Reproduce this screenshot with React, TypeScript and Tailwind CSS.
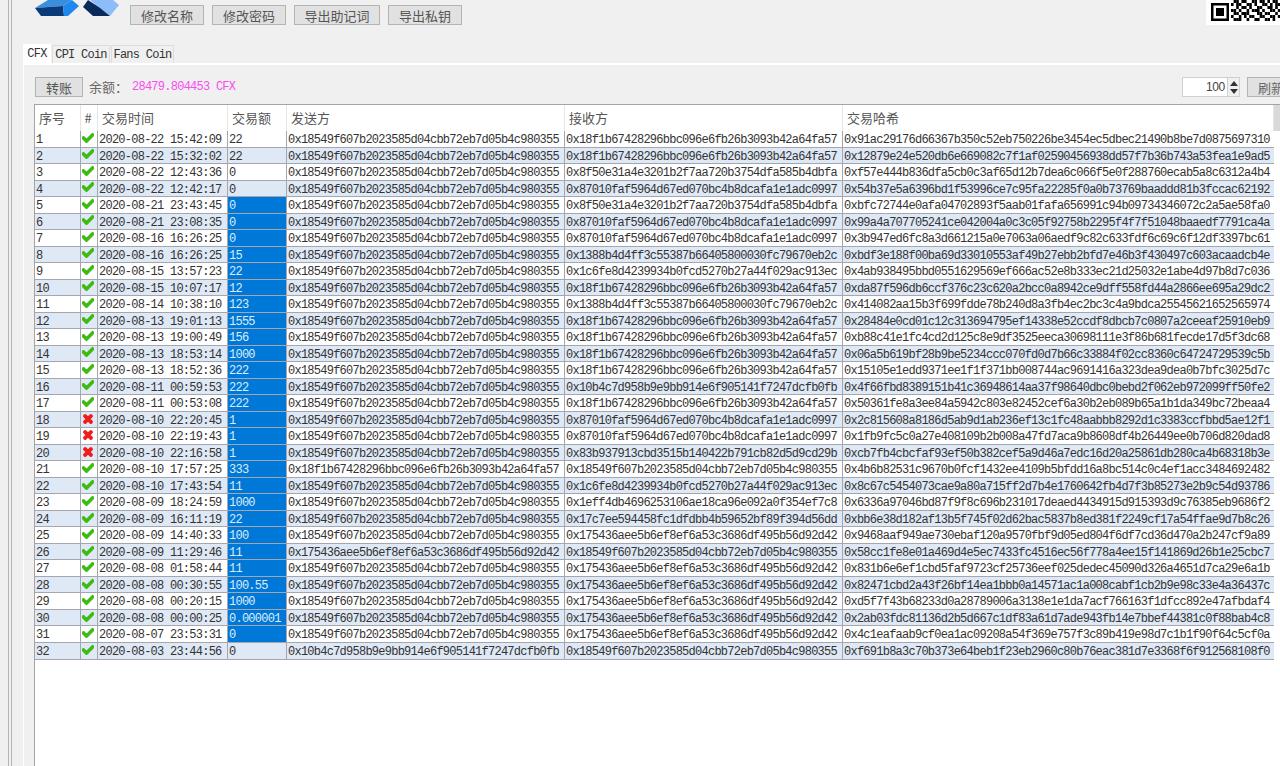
import { FaCheck, FaTimes } from 'react-icons/fa';

const S = '0x18549f607b2023585d04cbb72eb7d05b4c980355';
const A = '0x18f1b67428296bbc096e6fb26b3093b42a64fa57';
const B = '0x8f50e31a4e3201b2f7aa720b3754dfa585b4dbfa';
const C = '0x87010faf5964d67ed070bc4b8dcafa1e1adc0997';
const D = '0x1388b4d4ff3c55387b66405800030fc79670eb2c';
const E = '0x1c6fe8d4239934b0fcd5270b27a44f029ac913ec';
const F = '0x10b4c7d958b9e9bb914e6f905141f7247dcfb0fb';
const G = '0x175436aee5b6ef8ef6a53c3686df495b56d92d42';

type Row = [string, string, string, string, string];

const rows: Row[] = [
  ['2020-08-22 15:42:09', '22', S, A, '0x91ac29176d66367b350c52eb750226be3454ec5dbec21490b8be7d0875697310'],
  ['2020-08-22 15:32:02', '22', S, A, '0x12879e24e520db6e669082c7f1af02590456938dd57f7b36b743a53fea1e9ad5'],
  ['2020-08-22 12:43:36', '0', S, B, '0xf57e444b836dfa5cb0c3af65d12b7dea6c066f5e0f288760ecab5a8c6312a4b4'],
  ['2020-08-22 12:42:17', '0', S, C, '0x54b37e5a6396bd1f53996ce7c95fa22285f0a0b73769baaddd81b3fccac62192'],
  ['2020-08-21 23:43:45', '0', S, B, '0xbfc72744e0afa04702893f5aab01fafa656991c94b09734346072c2a5ae58fa0'],
  ['2020-08-21 23:08:35', '0', S, C, '0x99a4a707705241ce042004a0c3c05f92758b2295f4f7f51048baaedf7791ca4a'],
  ['2020-08-16 16:26:25', '0', S, C, '0x3b947ed6fc8a3d661215a0e7063a06aedf9c82c633fdf6c69c6f12df3397bc61'],
  ['2020-08-16 16:26:25', '15', S, D, '0xbdf3e188f00ba69d33010553af49b27ebb2bfd7e46b3f430497c603acaadcb4e'],
  ['2020-08-15 13:57:23', '22', S, E, '0x4ab938495bbd0551629569ef666ac52e8b333ec21d25032e1abe4d97b8d7c036'],
  ['2020-08-15 10:07:17', '12', S, A, '0xda87f596db6ccf376c23c620a2bcc0a8942ce9dff558fd44a2866ee695a29dc2'],
  ['2020-08-14 10:38:10', '123', S, D, '0x414082aa15b3f699fdde78b240d8a3fb4ec2bc3c4a9bdca25545621652565974'],
  ['2020-08-13 19:01:13', '1555', S, A, '0x28484e0cd01c12c313694795ef14338e52ccdf8dbcb7c0807a2ceeaf25910eb9'],
  ['2020-08-13 19:00:49', '156', S, A, '0xb88c41e1fc4cd2d125c8e9df3525eeca30698111e3f86b681fecde17d5f3dc68'],
  ['2020-08-13 18:53:14', '1000', S, A, '0x06a5b619bf28b9be5234ccc070fd0d7b66c33884f02cc8360c64724729539c5b'],
  ['2020-08-13 18:52:36', '222', S, A, '0x15105e1edd9371ee1f1f371bb008744ac9691416a323dea9dea0b7bfc3025d7c'],
  ['2020-08-11 00:59:53', '222', S, F, '0x4f66fbd8389151b41c36948614aa37f98640dbc0bebd2f062eb972099ff50fe2'],
  ['2020-08-11 00:53:08', '222', S, A, '0x50361fe8a3ee84a5942c803e82452cef6a30b2eb089b65a1b1da349bc72beaa4'],
  ['2020-08-10 22:20:45', '1', S, C, '0x2c815608a8186d5ab9d1ab236ef13c1fc48aabbb8292d1c3383ccfbbd5ae12f1'],
  ['2020-08-10 22:19:43', '1', S, C, '0x1fb9fc5c0a27e408109b2b008a47fd7aca9b8608df4b26449ee0b706d820dad8'],
  ['2020-08-10 22:16:58', '1', S, '0x83b937913cbd3515b140422b791cb82d5d9cd29b', '0xcb7fb4cbcfaf93ef50b382cef5a9d46a7edc16d20a25861db280ca4b68318b3e'],
  ['2020-08-10 17:57:25', '333', A, S, '0x4b6b82531c9670b0fcf1432ee4109b5bfdd16a8bc514c0c4ef1acc3484692482'],
  ['2020-08-10 17:43:54', '11', S, E, '0x8c67c5454073cae9a80a715ff2d7b4e1760642fb4d7f3b85273e2b9c54d93786'],
  ['2020-08-09 18:24:59', '1000', S, '0x1eff4db4696253106ae18ca96e092a0f354ef7c8', '0x6336a97046bd87f9f8c696b231017deaed4434915d915393d9c76385eb9686f2'],
  ['2020-08-09 16:11:19', '22', S, '0x17c7ee594458fc1dfdbb4b59652bf89f394d56dd', '0xbb6e38d182af13b5f745f02d62bac5837b8ed381f2249cf17a54ffae9d7b8c26'],
  ['2020-08-09 14:40:33', '100', S, G, '0x9468aaf949ae730ebaf120a9570fbf9d05ed804f6df7cd36d470a2b247cf9a89'],
  ['2020-08-09 11:29:46', '11', G, S, '0x58cc1fe8e01a469d4e5ec7433fc4516ec56f778a4ee15f141869d26b1e25cbc7'],
  ['2020-08-08 01:58:44', '11', S, G, '0x831b6e6ef1cbd5faf9723cf25736eef025dedec45090d326a4651d7ca29e6a1b'],
  ['2020-08-08 00:30:55', '100.55', S, G, '0x82471cbd2a43f26bf14ea1bbb0a14571ac1a008cabf1cb2b9e98c33e4a36437c'],
  ['2020-08-08 00:20:15', '1000', S, G, '0xd5f7f43b68233d0a28789006a3138e1e1da7acf766163f1dfcc892e47afbdaf4'],
  ['2020-08-08 00:00:25', '0.000001', S, G, '0x2ab03fdc81136d2b5d667c1df83a61d7ade943fb14e7bbef44381c0f88bab4c8'],
  ['2020-08-07 23:53:31', '0', S, G, '0x4c1eafaab9cf0ea1ac09208a54f369e757f3c89b419e98d7c1b1f90f64c5cf0a'],
  ['2020-08-03 23:44:56', '0', F, S, '0xf691b8a3c70b373e64beb1f23eb2960c80b76eac381d7e3368f6f912568108f0'],
];

const qr = [
  '0110110011011010110100',
  '1011001101001101011011',
  '0010110100110011010110',
  '1101001011101001101001',
  '0110111000110110010110',
  '1001010110011001101101',
  '0111001001100110100010',
];

function Btn({ label, w }: { label: string; w: string }) {
  return (
    <button className={`${w} h-[20px] bg-[#e1e1e1] border border-[#b4b4b4] text-[13px] leading-none text-[#555] font-['Noto_Sans_CJK_SC',sans-serif]`}>
      {label}
    </button>
  );
}

function Logo() {
  return (
    <svg width="84" height="16" viewBox="0 0 84 16" className="shrink-0">
      <polygon points="0,8 13,0 37,0 28,6" fill="#3a8fdc" />
      <polygon points="0,8 6,16 29,16 28,6" fill="#0b3a7a" />
      <polygon points="28,6 37,0 44,6 33,16 29,16" fill="#1e88f0" />
      <polygon points="55,0 78,0 84,5 75,16 65,9" fill="#8dbdf9" />
      <polygon points="48,7 53,0 65,8 75,16 58,16" fill="#0a2a5a" />
    </svg>
  );
}

function QrCode() {
  return (
    <div className="w-[74px] h-[25px] bg-white shrink-0 overflow-hidden">
      <svg width="74" height="25" viewBox="0 0 74 25">
        <rect x="5" y="3" width="18" height="18" fill="#000" />
        <rect x="7.5" y="5.5" width="13" height="13" fill="#fff" />
        <rect x="10" y="8" width="8" height="8" fill="#000" />
        {qr.map((line, y) =>
          line.split('').map((c, x) =>
            c === '1' ? <rect key={`${x}-${y}`} x={25 + x * 2.6} y={y * 3} width="2.6" height="3" fill="#000" /> : null,
          ),
        )}
      </svg>
    </div>
  );
}

const gridCols = 'grid grid-cols-[46px_17px_130px_59px_278px_278px_431px]';
const headers = ['序号', '#', '交易时间', '交易额', '发送方', '接收方', '交易哈希'];

function DataRow({ row, i }: { row: Row; i: number }) {
  const failed = i >= 17 && i <= 19;
  const selected = i >= 4 && i <= 30;
  const cell = 'border-r border-b border-[#a4a7b0] pl-[1px] pt-[1px] overflow-hidden whitespace-pre leading-[16px]';
  return (
    <div className={`${gridCols} h-[16.516px] ${i % 2 === 1 ? 'bg-[#dfe8f5]' : 'bg-white'}`}>
      <div className={cell}>{i + 1}</div>
      <div className="border-r border-b border-[#a4a7b0] flex items-center justify-center pr-[2px] pb-[2px]">
        {failed ? (
          <FaTimes className="text-[#f01d1d] text-[12px]" stroke="currentColor" strokeWidth={70} />
        ) : (
          <FaCheck className="text-[#3dbb10] text-[12px]" stroke="currentColor" strokeWidth={50} />
        )}
      </div>
      <div className={cell}>{row[0]}</div>
      <div className={`${cell} ${selected ? 'bg-[#0078d7] text-[#dcecfa]' : ''}`}>{row[1]}</div>
      <div className={cell}>{row[2]}</div>
      <div className={cell}>{row[3]}</div>
      <div className={`${cell} border-r-0`}>{row[4]}</div>
    </div>
  );
}

export default function App() {
  return (
    <div className="w-[1280px] h-[766px] overflow-hidden flex bg-[#f0f0f0] text-[#333] font-['Liberation_Mono','Noto_Sans_CJK_SC',monospace] text-[12px] tracking-[-0.75px]">
      {/* window frame */}
      <div className="w-[12px] shrink-0 pl-[8px]">
        <div className="w-[4px] h-full border-x border-[#b5b5b5]" />
      </div>

      <div className="flex-1 min-w-0 flex flex-col">
        {/* top bar */}
        <div className="h-[45px] shrink-0 flex items-start tracking-normal">
          <div className="pl-[23px]">
            <Logo />
          </div>
          <div className="flex gap-2 mt-[5px] ml-[11px]">
            <Btn label="修改名称" w="w-[74px]" />
            <Btn label="修改密码" w="w-[74px]" />
            <Btn label="导出助记词" w="w-[86px]" />
            <Btn label="导出私钥" w="w-[74px]" />
          </div>
          <div className="ml-auto">
            <QrCode />
          </div>
        </div>

        {/* tabs */}
        <div className="h-[18px] shrink-0 flex items-end pl-[11px] gap-px">
          <div className="w-[28px] h-[19px] bg-white flex items-center justify-center">CFX</div>
          <div className="w-[58px] h-[18px] pt-[1px] bg-[#f0f0f0] border border-b-0 border-[#dcdcdc] flex items-center justify-center">CPI Coin</div>
          <div className="w-[63px] h-[18px] pt-[1px] bg-[#f0f0f0] border border-b-0 border-[#dcdcdc] flex items-center justify-center">Fans Coin</div>
        </div>

        {/* panel */}
        <div className="flex-1 min-h-0 ml-[11px] border-t-2 border-l border-white pl-[10px] flex flex-col">
          <div className="h-[39px] shrink-0 flex items-center pt-[5px] pl-[1px]">
            <button className="w-[48px] h-[20px] bg-[#e1e1e1] border border-[#b4b4b4] text-[13px] tracking-normal leading-none text-[#555] font-['Noto_Sans_CJK_SC',sans-serif]">
              转账
            </button>
            <span className="ml-[6px] text-[13px] tracking-normal text-[#666] font-['Noto_Sans_CJK_SC',sans-serif]">余额：</span>
            <span className="ml-[4px] text-[#f94df0]">28479.804453 CFX</span>
            <div className="ml-auto flex items-center">
              <div className="w-[58px] h-[20px] bg-white border border-[#d0d0d0] flex items-center">
                <span className="flex-1 text-right text-[12px] tracking-[-0.3px] text-[#444] font-['Liberation_Sans',sans-serif] pr-[2px]">100</span>
                <div className="w-[12px] h-full flex flex-col items-center justify-center gap-[3px] bg-[#f0f0f0] border-l border-[#d0d0d0]">
                  <div className="w-0 h-0 border-x-[4px] border-x-transparent border-b-[5px] border-b-[#333]" />
                  <div className="w-0 h-0 border-x-[4px] border-x-transparent border-t-[5px] border-t-[#333]" />
                </div>
              </div>
              <button className="w-[48px] h-[20px] ml-[7px] -mr-[15px] shrink-0 bg-[#e1e1e1] border border-[#b4b4b4] text-[13px] tracking-normal leading-none text-[#666] whitespace-nowrap font-['Noto_Sans_CJK_SC',sans-serif]">
                刷新
              </button>
            </div>
          </div>

          {/* table */}
          <div className="flex-1 min-h-0 bg-white border-t border-l border-[#a4a4a4] flex">
            <div className="flex-1 min-w-0">
              <div className={`${gridCols} h-[26px] text-[13px] tracking-normal text-[#555] font-['Noto_Sans_CJK_SC',sans-serif]`}>
                {headers.map((h, i) => (
                  <div key={h} className={`flex items-center border-r border-[#e6e6e6] ${i === 1 ? 'justify-center pr-[2px]' : 'pl-[4px]'}`}>
                    {h}
                  </div>
                ))}
              </div>
              {rows.map((row, i) => (
                <DataRow key={i} row={row} i={i} />
              ))}
            </div>
            <div className="w-[6px] shrink-0">
              <div className="h-[26px] bg-[#d9d9d9]" />
            </div>
          </div>
        </div>
      </div>
    </div>
  );
}
